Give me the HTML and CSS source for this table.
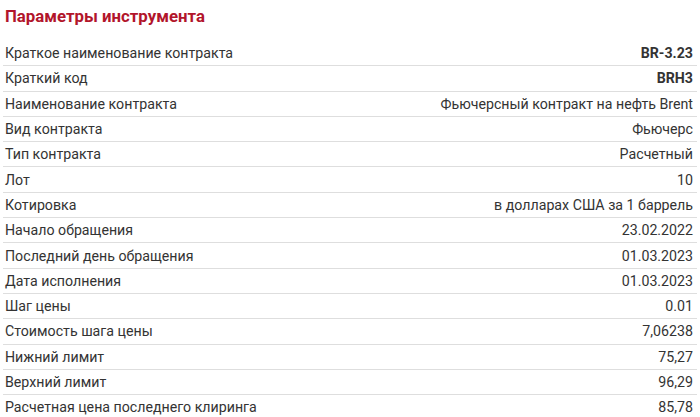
FILE: index.html
```html
<!DOCTYPE html>
<html lang="ru">
<head>
<meta charset="utf-8">
<link rel="stylesheet" href="styles.css">
</head>
<body>
<div class="page">
  <h2 class="title">Параметры инструмента</h2>
  <div class="table">
    <div class="row"><span class="k">Краткое наименование контракта</span><span class="v b">BR-3.23</span></div>
    <div class="row"><span class="k">Краткий код</span><span class="v b">BRH3</span></div>
    <div class="row"><span class="k">Наименование контракта</span><span class="v">Фьючерсный контракт на нефть Brent</span></div>
    <div class="row"><span class="k">Вид контракта</span><span class="v">Фьючерс</span></div>
    <div class="row"><span class="k">Тип контракта</span><span class="v">Расчетный</span></div>
    <div class="row"><span class="k">Лот</span><span class="v">10</span></div>
    <div class="row"><span class="k">Котировка</span><span class="v">в долларах США за 1 баррель</span></div>
    <div class="row"><span class="k">Начало обращения</span><span class="v">23.02.2022</span></div>
    <div class="row"><span class="k">Последний день обращения</span><span class="v">01.03.2023</span></div>
    <div class="row"><span class="k">Дата исполнения</span><span class="v">01.03.2023</span></div>
    <div class="row"><span class="k">Шаг цены</span><span class="v">0.01</span></div>
    <div class="row"><span class="k">Стоимость шага цены</span><span class="v">7,06238</span></div>
    <div class="row"><span class="k">Нижний лимит</span><span class="v">75,27</span></div>
    <div class="row"><span class="k">Верхний лимит</span><span class="v">96,29</span></div>
    <div class="row"><span class="k">Расчетная цена последнего клиринга</span><span class="v">85,78</span></div>
  </div>
</div>
</body>
</html>
```
FILE: styles.css
```css
html, body { margin: 0; padding: 0; background: #fff; }
body { font-family: Roboto, "Noto Sans", sans-serif; color: #333; }
.page { padding: 4px 3px 0 3px; }
.title {
  margin: 0 0 0 2px;
  font-size: 16.8px;
  font-weight: 700;
  color: #b2152b;
  line-height: 24px;
}
.table { margin-top: 13px; }
.row {
  display: flex;
  justify-content: space-between;
  align-items: center;
  height: 25.3px;
  box-sizing: border-box;
  border-bottom: 1px solid #dedede;
  padding: 0 4px 0 2px;
  font-size: 14.2px;
}
.v.b { font-weight: 700; }
```
